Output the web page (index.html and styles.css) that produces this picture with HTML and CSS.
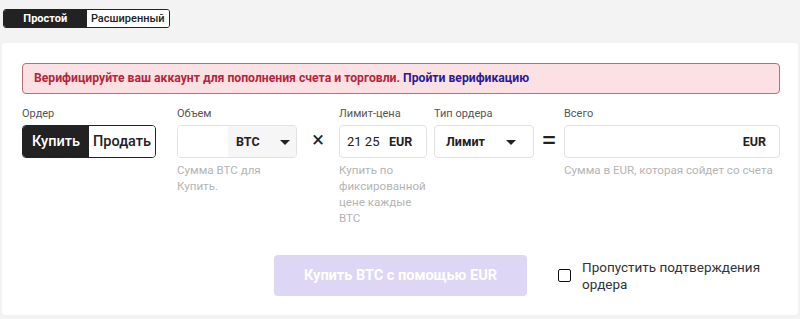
FILE: index.html
```html
<!DOCTYPE html>
<html lang="ru">
<head>
    <meta charset="UTF-8">
    <title>Купить BTC</title>
    <link rel="stylesheet" href="styles.css">
</head>
<body>
    <div class="tabs">
        <button class="tab tab-active">Простой</button>
        <button class="tab">Расширенный</button>
    </div>
    <div class="card">
        <div class="alert">
            Верифицируйте ваш аккаунт для пополнения счета и торговли. <a href="#">Пройти верификацию</a>
        </div>
        <div class="form-row">
            <div class="field f-order">
                <label>Ордер</label>
                <div class="toggle">
                    <button class="toggle-btn toggle-active">Купить</button>
                    <button class="toggle-btn">Продать</button>
                </div>
            </div>
            <div class="field f-volume">
                <label>Объем</label>
                <div class="box">
                    <input class="box-input" type="text">
                    <div class="box-currency">BTC <span class="caret"></span></div>
                </div>
                <p class="hint">Сумма BTC для Купить.</p>
            </div>
            <div class="sign">&times;</div>
            <div class="field f-price">
                <label>Лимит-цена</label>
                <div class="box">
                    <span class="price-value">21 25</span>
                    <span class="unit">EUR</span>
                </div>
                <p class="hint">Купить по фиксированной цене каждые BTC</p>
            </div>
            <div class="field f-type">
                <label>Тип ордера</label>
                <div class="box select">
                    <span>Лимит</span>
                    <span class="caret"></span>
                </div>
            </div>
            <div class="sign">=</div>
            <div class="field f-total">
                <label>Всего</label>
                <div class="box total">
                    <span class="unit">EUR</span>
                </div>
                <p class="hint">Сумма в EUR, которая сойдет со счета</p>
            </div>
        </div>
        <div class="submit-row">
            <button class="submit" disabled>Купить BTC с помощью EUR</button>
            <label class="check">
                <span class="check-box"></span>
                <span>Пропустить подтверждения<br>ордера</span>
            </label>
        </div>
    </div>
</body>
</html>
```

FILE: styles.css
```css
body{
    margin: 0;
    background-color: #f3f3f3;
    font-family: Roboto, "Noto Sans", Arial, sans-serif;
    color: #222;
}
button{
    font-family: inherit;
}
.tabs{
    display: flex;
    margin: 9px 0 0 3px;
    width: 167px;
    height: 19px;
    border: 1px solid #222;
    border-radius: 3px;
    overflow: hidden;
    box-sizing: border-box;
}
.tab{
    flex: 1;
    border: none;
    background: #fff;
    color: #222;
    font-size: 11px;
    font-weight: 500;
    padding: 0;
    line-height: 17px;
}
.tab-active{
    background: #222;
    color: #fff;
    font-weight: 700;
}
.card{
    background: #fff;
    margin: 15px 2px 0 2px;
    height: 272px;
    padding: 20px 18px 0 20px;
    box-sizing: border-box;
    border-radius: 3px;
}
.alert{
    height: 31px;
    box-sizing: border-box;
    border: 1px solid #b4707a;
    border-radius: 4px;
    background: #fbe1e3;
    color: #b3263e;
    font-size: 12.2px;
    font-weight: 700;
    padding: 0 11px;
    line-height: 29px;
}
.alert a{
    color: #2b1a94;
    text-decoration: none;
}
.form-row{
    display: flex;
    margin-top: 12px;
    height: 120px;
}
.field label{
    display: block;
    font-size: 11px;
    color: #555;
    height: 19px;
    line-height: 15px;
}
.f-order{ width: 134px; margin-right: 21px; }
.f-volume{ width: 120px; }
.f-price{ width: 88px; margin-right: 7px; }
.f-type{ width: 100px; }
.f-total{ width: 216px; }
.sign{
    width: 42px;
    text-align: center;
    padding-top: 19px;
    font-size: 22px;
    line-height: 30px;
    color: #222;
}
.f-type + .sign{
    width: 30px;
    font-size: 28px;
}
.toggle{
    display: flex;
    height: 33px;
    border: 1px solid #222;
    border-radius: 4px;
    overflow: hidden;
    box-sizing: border-box;
}
.toggle-btn{
    flex: 1;
    border: none;
    background: #fff;
    color: #222;
    font-size: 14.5px;
    font-weight: 500;
    padding: 0;
}
.toggle-active{
    background: #222;
    color: #fff;
}
.box{
    display: flex;
    align-items: center;
    height: 33px;
    border: 1px solid #e2e2e2;
    border-radius: 4px;
    box-sizing: border-box;
    overflow: hidden;
    font-size: 12.5px;
}
.box-input{
    width: 50px;
    height: 100%;
    border: none;
    padding: 0;
    outline: none;
}
.box-currency{
    flex: 1;
    display: flex;
    align-items: center;
    height: 100%;
    background: #f6f6f6;
    font-weight: 700;
    padding-left: 8px;
    gap: 20px;
}
.caret{
    width: 0;
    height: 0;
    border-left: 5px solid transparent;
    border-right: 5px solid transparent;
    border-top: 5px solid #222;
    margin-top: 2px;
}
.price-value{
    width: 33px;
    padding-left: 7px;
    overflow: hidden;
    white-space: nowrap;
    font-size: 13px;
}
.unit{
    font-weight: 700;
    margin-left: 9px;
}
.select{
    justify-content: space-between;
    padding: 0 17px 0 11px;
    font-weight: 700;
}
.total{
    justify-content: flex-end;
    padding-right: 13px;
}
.hint{
    margin: 4px 0 0;
    font-size: 11.6px;
    line-height: 16px;
    color: #b4b4b4;
}
.submit-row{
    display: flex;
    align-items: center;
    margin-top: 29px;
    padding-left: 252px;
}
.submit{
    width: 253px;
    height: 41px;
    border: none;
    border-radius: 4px;
    background: #ddd7f5;
    color: #fff;
    font-size: 14.5px;
    font-weight: 700;
}
.check{
    display: flex;
    align-items: center;
    gap: 11px;
    margin-left: 31px;
    font-size: 13.5px;
    line-height: 17px;
    color: #333;
}
.check-box{
    width: 13px;
    height: 13px;
    border: 1.5px solid #111;
    border-radius: 2px;
    box-sizing: border-box;
}
```
